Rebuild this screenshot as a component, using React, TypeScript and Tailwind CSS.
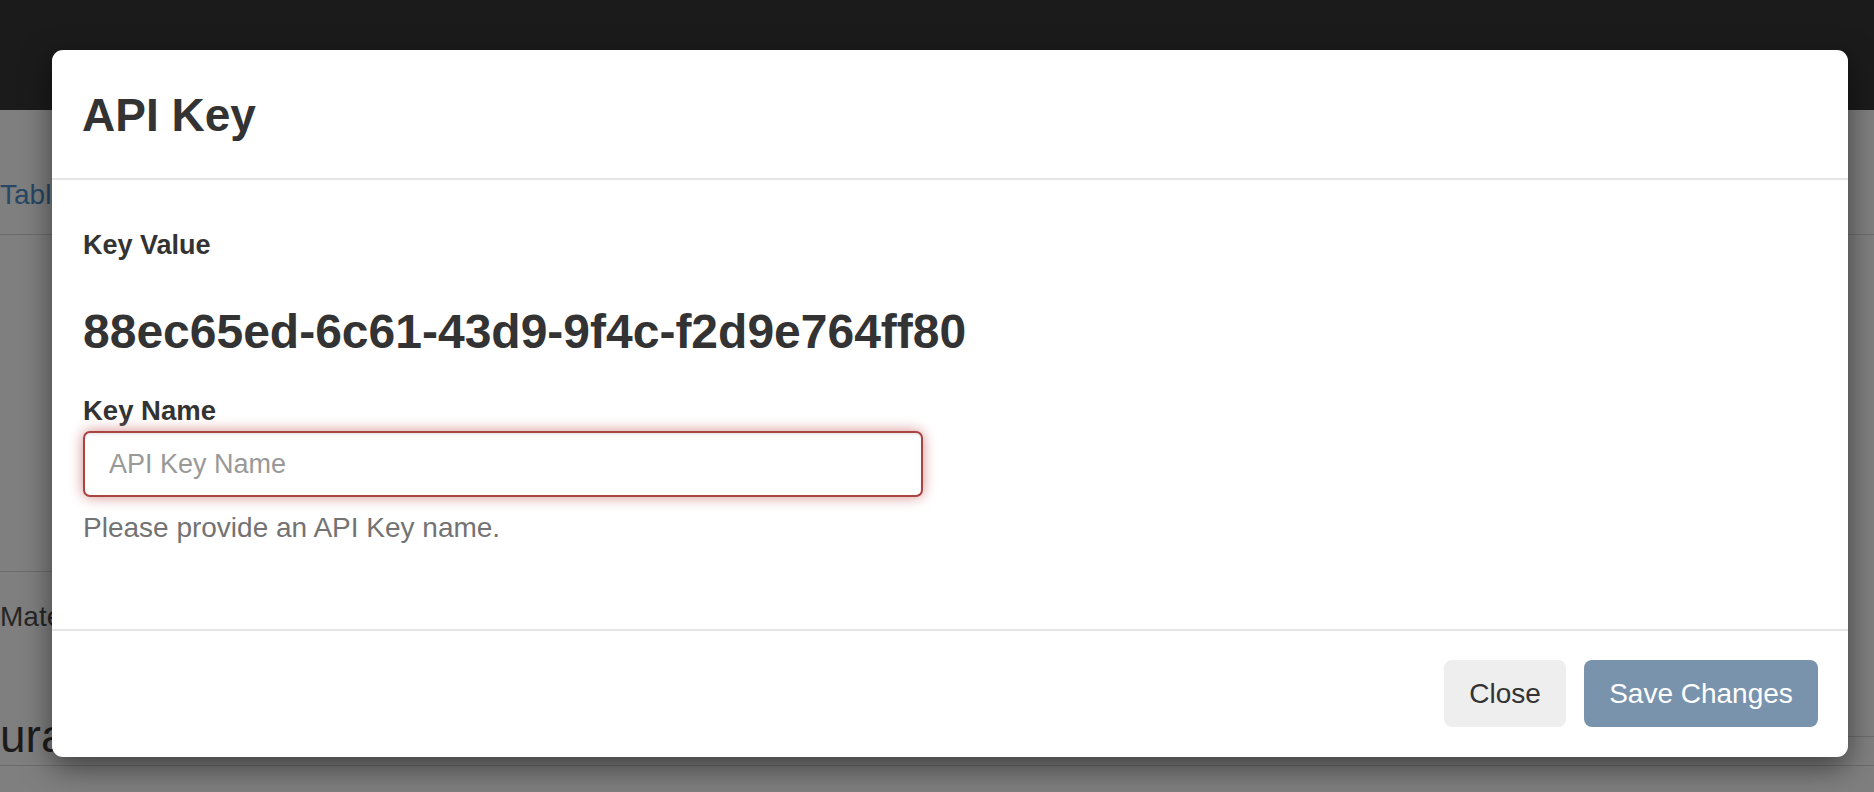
import React from "react";

export default function App() {
  const font = { fontFamily: '"Liberation Sans", Arial, Helvetica, sans-serif' };
  return (
    <div
      className="relative w-[1874px] h-[792px] overflow-hidden bg-[#7f7f7f] text-[#333333]"
      style={font}
    >
      {/* background page (dimmed by backdrop) */}
      <div className="h-[110px] bg-[#1b1b1b]" />
      <div className="flex flex-col">
        <div className="h-[125px] border-b border-[#6c6c6c] flex items-center">
          <span className="mt-[46px] text-[28px] text-[#264766] leading-none">Table</span>
        </div>
        <div className="h-[337px] w-[900px] border-b border-[#6c6c6c]" />
        <div className="h-[82px] w-[900px] flex items-center">
          <span className="mt-[8px] text-[28px] text-[#262626] leading-none">Mate</span>
        </div>
        <div className="flex">
          <div className="w-[1000px] h-[112px] border-b border-[#6c6c6c] flex items-end">
            <span className="mb-[6px] text-[46px] text-[#1c1c1c] leading-none">ura</span>
          </div>
          <div className="flex-1 border-t border-b border-[#6c6c6c] mt-[82px] h-[30px]" />
        </div>
      </div>

      {/* modal */}
      <div className="absolute left-[52px] top-[50px] w-[1796px] h-[707px] bg-white rounded-[11px] shadow-[0_10px_30px_rgba(0,0,0,0.5)] flex flex-col">
        <div className="h-[130px] border-b-2 border-[#e5e5e5] flex items-center pl-[30px]">
          <h4 className="mt-[2px] text-[46px] font-bold leading-[51px] text-[#333333]">API Key</h4>
        </div>
        <div className="h-[449px] px-[31px] pt-[46px] flex flex-col">
          <label className="block h-[38px] text-[27px] leading-[38px] font-bold">Key Value</label>
          <div className="mt-[41px] h-[53px] text-[48px] leading-[53px] font-bold">
            88ec65ed-6c61-43d9-9f4c-f2d9e764ff80
          </div>
          <label className="mt-[34px] block h-[38px] text-[27.5px] leading-[38px] font-bold">Key Name</label>
          <input
            className="mt-[1px] w-[840px] h-[66px] border-2 border-[#a94442] rounded-[7px] px-[24px] text-[27px] text-[#555555] placeholder:text-[#999999] outline-none shadow-[inset_0_2px_2px_rgba(0,0,0,0.075),0_0_14px_#d48f8e] bg-white"
            style={font}
            placeholder="API Key Name"
          />
          <div className="mt-[12px] h-[38px] text-[28px] leading-[38px] text-[#737373]">
            Please provide an API Key name.
          </div>
        </div>
        <div className="h-[128px] border-t-2 border-[#e5e5e5] flex justify-end items-start pt-[29px] pr-[30px] gap-[18px]">
          <button
            className="w-[122px] h-[67px] rounded-[8px] bg-[#eeeeee] text-[28px] text-[#333333] flex items-center justify-center"
            style={font}
          >
            Close
          </button>
          <button
            className="w-[234px] h-[67px] rounded-[8px] bg-[#7a93ad] text-[28px] text-white flex items-center justify-center"
            style={font}
          >
            Save Changes
          </button>
        </div>
      </div>
    </div>
  );
}
